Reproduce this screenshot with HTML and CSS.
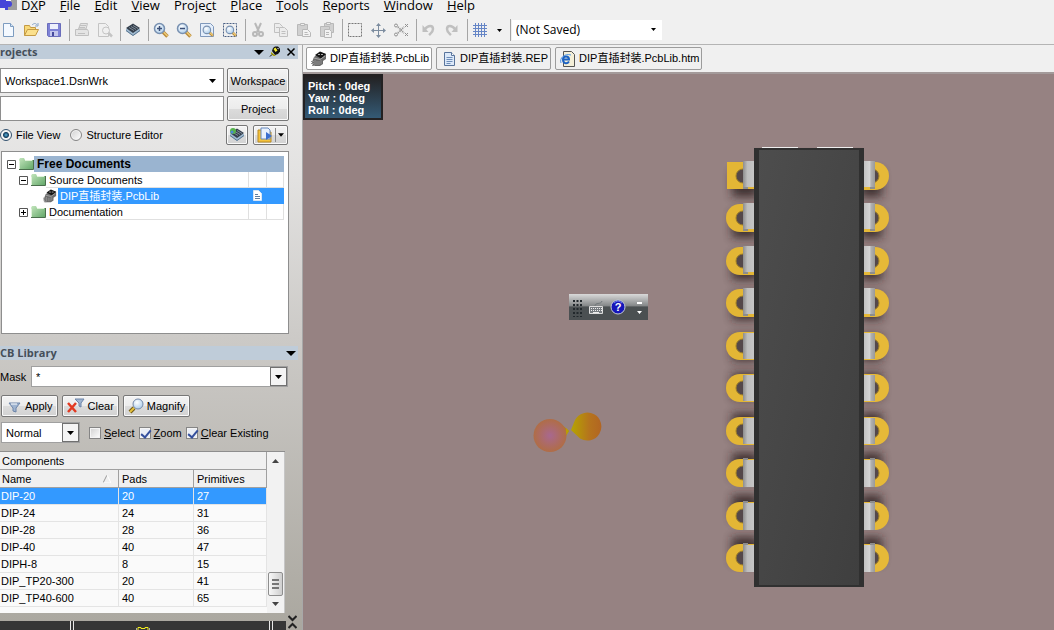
FILE: index.html
```html
<!DOCTYPE html>
<html lang="en">
<head>
<meta charset="utf-8">
<title>DXP - PCB Library</title>
<link rel="stylesheet" href="styles.css">
</head>
<body>
<svg class="defs" aria-hidden="true">
  <defs>
    <linearGradient id="folderGreen" x1="0" y1="0" x2="1" y2="1"><stop offset="0" stop-color="#c4e6bd"/><stop offset="1" stop-color="#5fa566"/></linearGradient>
    <radialGradient id="gloss" cx=".4" cy=".35" r=".7"><stop offset="0" stop-color="#fff"/><stop offset="1" stop-color="#a9cbea"/></radialGradient>
    <symbol id="i-folder" viewBox="0 0 16 14"><path d="M1 13V3l1-2h4l1 2h8v10z" fill="url(#folderGreen)"/><path d="M1.500 3.500V12M7 3.500h7" stroke="#dff3da" fill="none"/><path d="M1 12.500h14.500V3" stroke="#4a6e4c" fill="none"/></symbol>
    <symbol id="i-chip" viewBox="0 0 16 16"><path d="M3 6l6-5 6 2v5l-3 2v3l-3 2H2l-1-4z" fill="#6a6a6a"/><path d="M4 4l5-3.500 6 2.500-5 4.500z" fill="#161616"/><path d="M0 10.500h3M0 12.500h3M1 14.500h3M4 9v5M6 10v4M8 10v4M10 9v4" stroke="#909090"/><path d="M3 7l6 1.500 5-3.500" stroke="#a8a8a8" fill="none"/><path d="M7 3.500h2M10 3.500h2" stroke="#aaa"/></symbol>
    <symbol id="i-doc" viewBox="0 0 16 16"><path d="M3.500 1.500h7l3 3v10h-10z" fill="#dce9f9" stroke="#58749c"/><path d="M10.500 1.500v3h3" fill="#fff" stroke="#58749c"/><path d="M5.500 6.500h6M5.500 8.500h6M5.500 10.500h6M5.500 12.500h4" stroke="#6e8db8"/></symbol>
    <symbol id="i-stack" viewBox="0 0 16 16"><path d="M1 9l7 5 7-5v-2H1z" fill="#9fb9cf"/><path d="M1 8.500l7 5 7-5" stroke="#5a7690" fill="none"/><path d="M1 6l7-4.500L15 6l-7 5z" fill="#333e4b"/><path d="M4 5.500l5 3M6 4.500l5 3M8 3.500l5 3" stroke="#7f8b98"/></symbol>
    <symbol id="i-lens" viewBox="0 0 16 16"><path d="M10 10l4.500 4.500" stroke="#b98a3a" stroke-width="3.500"/><path d="M10.500 10l4 4" stroke="#f0cd78" stroke-width="1.500"/><circle cx="6.500" cy="6.500" r="5" fill="url(#gloss)" stroke="#7890b0" stroke-width="1.500"/></symbol>
    <symbol id="i-down" viewBox="0 0 7 4"><path d="M0 0h7L3.500 4z"/></symbol>
  </defs>
</svg>

<nav class="menubar">
  <svg class="logo" viewBox="0 0 17 10"><path d="M0 0h8v10H0z" fill="#4646d8"/><path d="M8 0h9v10H8z" fill="#9d9d9d"/><path d="M0 8h5v2H0z" fill="#eee"/><circle cx="9" cy="4" r="3" fill="#4646d8"/><path d="M6 0h5v1H6z" fill="#f4f4f4"/></svg>
  <button>D<u>X</u>P</button><button><u>F</u>ile</button><button><u>E</u>dit</button><button><u>V</u>iew</button><button>Proje<u>c</u>t</button><button><u>P</u>lace</button><button><u>T</u>ools</button><button><u>R</u>eports</button><button><u>W</u>indow</button><button><u>H</u>elp</button>
</nav>

<div class="toolbar">
  <button aria-label="New"><svg viewBox="0 0 16 16"><path d="M3.500 1.500h7l3 3v10h-10z" fill="#f4f9ff" stroke="#7d9cc0"/><path d="M10.500 1.500v3h3" fill="#d6e5f6" stroke="#7d9cc0"/></svg></button>
  <button aria-label="Open"><svg viewBox="0 0 16 16"><path d="M1.500 13.500v-10h5l1 2h5v3" fill="#f8d978" stroke="#c49a45"/><path d="M1.500 13.500l3-6h11l-3 6z" fill="#fbe08c" stroke="#c49a45"/><path d="M9 3c2-2 4-2 5 0m1-2v3h-3" fill="none" stroke="#88a5c8"/></svg></button>
  <button aria-label="Save"><svg viewBox="0 0 16 16"><path d="M1.500 1.500h13v13h-12l-1-1z" fill="#7e82d6" stroke="#6a6dbb"/><path d="M4 2h8v5H4z" fill="#edf0fc"/><path d="M4 9h8v5H4z" fill="#c3c6ec"/><path d="M6 10h2v4H6z" fill="#45499d"/></svg></button>
  <i class="sep"></i>
  <button aria-label="Print" disabled><svg viewBox="0 0 16 16" fill="#e4e4e4" stroke="#c0c0c0"><path d="M4.500 7l2-5.500h7L12 7z"/><path d="M1.500 7.500h12l1 2v4h-13z"/><path d="M4 11.500h7M6 3.500h6M5 5.500h6"/></svg></button>
  <button aria-label="Preview" disabled><svg viewBox="0 0 16 16" fill="#f0f0f0" stroke="#c4c4c4"><path d="M1.500 1.500h7l3 3v10h-10z"/><circle cx="9" cy="8.500" r="3.500"/><path d="M11.500 11l3.500 3.500" stroke-width="2.500"/></svg></button>
  <i class="sep"></i>
  <button aria-label="Layers"><svg><use href="#i-stack"/></svg></button>
  <i class="sep"></i>
  <button aria-label="Zoom in"><svg viewBox="0 0 16 16"><use href="#i-lens"/><path d="M4 6.500h5M6.500 4v5" stroke="#3a4f78" stroke-width="1.500"/></svg></button>
  <button aria-label="Zoom out"><svg viewBox="0 0 16 16"><use href="#i-lens"/><path d="M4 6.500h5" stroke="#3a4f78" stroke-width="1.500"/></svg></button>
  <button aria-label="Zoom to page"><svg viewBox="0 0 16 16"><path d="M1.500 1.500h10l3 3v10h-13z" fill="#e4eefb" stroke="#7f98bb"/><use href="#i-lens" x="3" y="3" width="12" height="12"/></svg></button>
  <button aria-label="Zoom to selection"><svg viewBox="0 0 16 16"><path d="M1.500 1.500h13v13h-13z" fill="none" stroke="#4b6084" stroke-dasharray="2 1"/><use href="#i-lens" x="3" y="3" width="12" height="12"/></svg></button>
  <i class="sep"></i>
  <button aria-label="Cut" disabled><svg viewBox="0 0 16 16" fill="none" stroke="#b8b8b8" stroke-width="2"><path d="M5 1l4 9M11 1L7 10"/><circle cx="5" cy="12" r="2"/><circle cx="11" cy="12" r="2"/></svg></button>
  <button aria-label="Copy" disabled><svg viewBox="0 0 16 16" fill="#ececec" stroke="#c0c0c0"><path d="M1.500 1.500h5l3 3v6h-8z"/><path d="M6.500 5.500h5l3 3v6h-8z"/><path d="M3 5.500h3M8.500 9.500h4M8.500 11.500h4"/></svg></button>
  <button aria-label="Paste" disabled><svg viewBox="0 0 16 16" fill="#d0d0d0" stroke="#b8b8b8"><path d="M1.500 2.500h10v11h-10z"/><path d="M4.500 1.500h4v2h-4z" fill="#eee"/><path d="M6.500 7.500h5l3 3v4h-8z" fill="#f2f2f2"/><path d="M8.500 10.500h3M8.500 12.500h4"/></svg></button>
  <button aria-label="Rubber stamp" disabled><svg viewBox="0 0 16 16" fill="#d0d0d0" stroke="#b8b8b8"><path d="M5.500 1.500h9v9h-9z"/><path d="M1.500 4.500h9v10h-9z"/><path d="M7.500.500h4v2h-4z" fill="#eee"/><path d="M5.500 7.500h5l2 2v6h-7z" fill="#f2f2f2"/><path d="M7 10.500h3M7 12.500h3"/></svg></button>
  <i class="sep"></i>
  <button aria-label="Select area"><svg viewBox="0 0 16 16"><path d="M1.500 1.500h13v13h-13z" fill="none" stroke="#777" stroke-dasharray="2 1"/></svg></button>
  <button aria-label="Move"><svg viewBox="0 0 16 16"><path d="M8.500 3v11M3 8.500h11" stroke="#7c8c9f"/><path d="M8.500 1l2.500 3h-5zM8.500 16l2.500-3h-5zM1 8.500l3-2.500v5zM16 8.500l-3-2.500v5z" fill="#7c8c9f"/></svg></button>
  <button aria-label="Deselect"><svg viewBox="0 0 16 16" fill="none" stroke="#909090"><path d="M5 5l6 6M5 11l6-6" stroke-dasharray="1 1" stroke-width="2"/><circle cx="3" cy="3.500" r="1.500"/><circle cx="3" cy="12.500" r="1.500"/><path d="M12 2l3 3m0-3l-3 3M12 11l3 3m0-3l-3 3"/></svg></button>
  <i class="sep"></i>
  <button aria-label="Undo" disabled><svg viewBox="0 0 16 16"><path d="M4 7c3-4 8-4 8 0 0 3-2 4-4 6" fill="none" stroke="#c0c0c0" stroke-width="2.500"/><path d="M1.500 3v7h6z" fill="#c0c0c0"/></svg></button>
  <button aria-label="Redo" disabled><svg viewBox="0 0 16 16"><path d="M11 7C8 3 3 3 3 7c0 3 2 4 4 6" fill="none" stroke="#c0c0c0" stroke-width="2.500"/><path d="M13.500 3v7h-6z" fill="#c0c0c0"/></svg></button>
  <i class="sep"></i>
  <button aria-label="Grid"><svg viewBox="0 0 16 16"><path d="M3.500 1v14M6.500 1v14M9.500 1v14M12.500 1v14M1 3.500h14M1 6.500h14M1 9.500h14M1 12.500h14" stroke="#6585c6"/></svg></button>
  <button class="drop" aria-label="Grid options"><svg class="arrow"><use href="#i-down"/></svg></button>
  <i class="sep"></i>
  <div class="combo saved"><select aria-label="View configuration"><option>(Not Saved)</option></select><svg class="arrow"><use href="#i-down"/></svg></div>
</div>

<div class="work">
  <aside class="side">
    <div class="title projects"><h2>rojects</h2>
      <button aria-label="Panel menu"><svg viewBox="0 0 12 12"><path d="M1 4h10L6 9z"/></svg></button>
      <button aria-label="Pin"><svg viewBox="0 0 12 12"><path d="M3 5l1-3 2-1.500h3l2 2v3L9 8 6 9z" fill="#111"/><path d="M4.500 3l2-1.500 2 3L6.500 6z" fill="#f6ee30"/><path d="M8 2h1.500v1.500z" fill="#fff"/><path d="M2 6l5 4H4.500L2 8z" fill="#a8a000"/><path d="M3 8.500l-2 2" stroke="#000"/></svg></button>
      <button aria-label="Close"><svg viewBox="0 0 12 12"><path d="M2.500 2.500l7 7M9.500 2.500l-7 7" stroke="#000" stroke-width="1.500"/></svg></button>
    </div>
    <div class="files">
      <div class="combo workspace"><select aria-label="Workspace file"><option>Workspace1.DsnWrk</option></select><svg class="arrow"><use href="#i-down"/></svg></div>
      <button class="btn">Workspace</button>
      <input class="field" type="text" aria-label="Project file">
      <button class="btn">Project</button>
    </div>
    <div class="views">
      <label><input type="radio" name="view" checked>File View</label>
      <label><input type="radio" name="view">Structure Editor</label>
      <button class="btn first" aria-label="Refresh"><svg viewBox="0 0 16 16"><use href="#i-stack"/><circle cx="4" cy="4" r="3" fill="#54b34a"/><circle cx="3" cy="5" r="1.500" fill="#4c86d8"/></svg></button>
      <button class="btn open" aria-label="Open options"><svg viewBox="0 0 16 16"><path d="M1 3h5l1 2h7v10H1z" fill="#f5c33c" stroke="#b88a24"/><path d="M4 1h7l2 2v9H4z" fill="#e8f1fd" stroke="#6789bd"/><path d="M9 5l6 4-6 4z" fill="#3a6fd0"/></svg><i></i><svg class="arrow"><use href="#i-down"/></svg></button>
    </div>
    <div class="tree" role="tree">
      <div class="node root" role="treeitem"><svg class="toggle" viewBox="0 0 9 9"><path d="M.500.500h8v8h-8z" fill="#fff" stroke="#555"/><path d="M2 4.500h5" stroke="#000"/></svg><svg class="ico"><use href="#i-folder"/></svg><div class="cell"><b>Free Documents</b></div></div>
      <div class="node sub" role="treeitem"><svg class="toggle" viewBox="0 0 9 9"><path d="M.500.500h8v8h-8z" fill="#fff" stroke="#555"/><path d="M2 4.500h5" stroke="#000"/></svg><svg class="ico"><use href="#i-folder"/></svg><div class="cell"><span>Source Documents</span><i></i><i></i></div></div>
      <div class="node leaf" role="treeitem" aria-selected="true"><svg class="ico"><use href="#i-chip"/></svg><div class="cell"><span>DIP直插封装.PcbLib</span><i><svg viewBox="0 0 9 11"><path d="M.500.500h5l3 3v7h-8z" fill="#fff" stroke="#d8e6f5"/><path d="M2 4.500h3M2 6.500h5M2 8.500h5" stroke="#5f7da0"/></svg></i><i></i></div></div>
      <div class="node sub" role="treeitem"><svg class="toggle" viewBox="0 0 9 9"><path d="M.500.500h8v8h-8z" fill="#fff" stroke="#555"/><path d="M2 4.500h5M4.500 2v5" stroke="#000"/></svg><svg class="ico"><use href="#i-folder"/></svg><div class="cell"><span>Documentation</span><i></i><i></i></div></div>
    </div>

    <div class="title library"><h2>CB Library</h2><button aria-label="Panel menu"><svg viewBox="0 0 12 12"><path d="M1 4h10L6 9z"/></svg></button></div>
    <div class="mask"><label for="mask">Mask</label><div class="combo boxed"><select id="mask"><option>*</option></select><svg class="arrow"><use href="#i-down"/></svg></div></div>
    <div class="actions">
      <button class="btn"><svg viewBox="0 0 16 16"><path d="M3 5h11l-4 5v4l-3-1v-3z" fill="#9fb4d0" stroke="#6c84a8"/><path d="M5 6h6" stroke="#fff"/></svg>Apply</button>
      <button class="btn"><svg class="wide" viewBox="0 0 18 16"><path d="M8 1h9l-3 4v4l-2-1V5z" fill="#9fb4d0" stroke="#6c84a8"/><path d="M1 5l8 9M9 5l-8 9" stroke="#e23a22" stroke-width="2.500"/></svg>Clear</button>
      <button class="btn"><svg viewBox="0 0 16 16"><path d="M6 10l-4 4" stroke="#715b18" stroke-width="4"/><path d="M6 10l-4 4" stroke="#e6c23d" stroke-width="2"/><circle cx="10" cy="6" r="5" fill="url(#gloss)" stroke="#7488a8"/></svg>Magnify</button>
    </div>
    <div class="options">
      <div class="combo boxed mode"><select aria-label="Highlight mode"><option>Normal</option></select><svg class="arrow"><use href="#i-down"/></svg></div>
      <label><input type="checkbox"><span><u>S</u>elect</span></label>
      <label><input type="checkbox" checked><span><u>Z</u>oom</span></label>
      <label><input type="checkbox" checked><span><u>C</u>lear Existing</span></label>
    </div>
    <div class="list">
      <table>
        <colgroup><col class="c1"><col class="c2"><col></colgroup>
        <thead>
          <tr><th colspan="3">Components</th></tr>
          <tr><th><div class="sort">Name<svg viewBox="0 0 8 8"><path d="M0 8l4-8" stroke="#999" fill="none"/><path d="M4 0l4 8H0" stroke="#fff" fill="none"/></svg></div></th><th>Pads</th><th>Primitives</th></tr>
        </thead>
        <tbody>
          <tr class="on"><td>DIP-20</td><td>20</td><td>27</td></tr>
          <tr><td>DIP-24</td><td>24</td><td>31</td></tr>
          <tr><td>DIP-28</td><td>28</td><td>36</td></tr>
          <tr><td>DIP-40</td><td>40</td><td>47</td></tr>
          <tr><td>DIPH-8</td><td>8</td><td>15</td></tr>
          <tr><td>DIP_TP20-300</td><td>20</td><td>41</td></tr>
          <tr><td>DIP_TP40-600</td><td>40</td><td>65</td></tr>
        </tbody>
      </table>
      <div class="scroll"><svg viewBox="0 0 7 4"><path d="M0 4h7L3.500 0z" fill="#444"/></svg><div class="thumb"><i></i><i></i><i></i></div><svg viewBox="0 0 7 4"><path d="M0 0h7L3.500 4z" fill="#444"/></svg></div>
    </div>
    <div class="foot">
      <div class="strip"><i></i><svg viewBox="0 0 14 4"><path d="M2 4V1.500h3v1h4v-1h3V4" fill="none" stroke="#f2ee1c"/><path d="M0 2h1v2H0zM13 2h1v2h-1z" fill="#aaa"/></svg><i></i></div>
      <svg class="chev" viewBox="0 0 9 14"><path d="M.500 1l4 4 4-4M.500 13l4-4 4 4" fill="none" stroke="#222" stroke-width="2"/></svg>
    </div>
  </aside>

  <main class="main">
    <div class="tabs">
      <button class="tab on"><svg><use href="#i-chip"/></svg>DIP直插封装.PcbLib</button>
      <button class="tab"><svg><use href="#i-doc"/></svg>DIP直插封装.REP</button>
      <button class="tab"><svg viewBox="0 0 16 16"><path d="M3.500.500h8l3 3v12h-11z" fill="#f4efd8" stroke="#555"/><path d="M3 8.500h6c0-4-6-4-6 0s4 5 6 2" fill="none" stroke="#1b62c4" stroke-width="2"/><path d="M1 12C-1 7 5 2 11 4" fill="none" stroke="#4f94e6"/></svg>DIP直插封装.PcbLib.htm</button>
    </div>
    <div class="canvas">
      <div class="hud"><div>Pitch : 0deg</div><div>Yaw : 0deg</div><div>Roll : 0deg</div></div>
      <div class="float">
        <svg viewBox="0 0 79 26">
          <path d="M5 6v17M8.500 6v17M12 6v17" stroke="#22282c" stroke-width="2" stroke-dasharray="2 2"/>
          <path d="M20.500 12.500h13v7h-13z" fill="#777c80" stroke="#ddd"/><path d="M22 14.500h11M22 16.500h11" stroke="#eee" stroke-dasharray="1 1"/><path d="M24 18.500h6" stroke="#eee"/><path d="M26 12c0-4 6-1 7-5" fill="none" stroke="#70777a"/>
          <circle cx="49" cy="13" r="7" fill="#1616b8" stroke="#c4cbd4"/><path d="M45 9q4-4 8 0" stroke="#6c7cf0" fill="none"/>
          <path d="M68 8h5v2h-5zM68 17h5l-2.500 3z" fill="#fff"/>
        </svg><span>?</span>
      </div>
      <svg class="cones" viewBox="0 0 72 44">
        <defs><radialGradient id="c1"><stop offset="0" stop-color="#a8688f"/><stop offset="1" stop-color="#b06d46"/></radialGradient><linearGradient id="c2"><stop offset="0" stop-color="#b5a400"/><stop offset=".6" stop-color="#b5741d"/><stop offset="1" stop-color="#b26522"/></linearGradient></defs>
        <path d="M28 13l9 8-7 9z" fill="#b58018"/><path d="M34 18l3 3-3 5z" fill="#b9a000"/><circle cx="18" cy="25.500" r="16.500" fill="url(#c1)"/>
        <path d="M39 20l4-10A14 14 0 1 1 48 28.500z" fill="url(#c2)"/>
      </svg>
      <svg class="package" viewBox="0 0 190 460">
        <defs>
          <linearGradient id="body" x1="0" y1="0" x2="1" y2="1"><stop offset="0" stop-color="#4d4d4d"/><stop offset="1" stop-color="#3f3f3f"/></linearGradient>
          <linearGradient id="leadL"><stop offset="0" stop-color="#8d8d8d"/><stop offset=".4" stop-color="#bdbdbd"/><stop offset="1" stop-color="#c6c6c6"/></linearGradient>
          <linearGradient id="leadR"><stop offset="0" stop-color="#c2c2c2"/><stop offset=".5" stop-color="#d4d4d4"/><stop offset=".65" stop-color="#b0b0b0"/><stop offset="1" stop-color="#999"/></linearGradient>
          <filter id="soft" x="-50%" y="-50%" width="200%" height="200%"><feGaussianBlur stdDeviation="5"/></filter>
          <g id="shade"><path d="M18 -13h26v26h-26zM146 -13h22v26h-22z" fill="#2a1a1a" opacity=".8" filter="url(#soft)"/></g>
          <g id="round"><path d="M40-14H26a14 14 0 0 0 0 28h14z"/></g>
          <g id="square"><path d="M13-14h27v27H13z"/></g>
          <g id="right"><path d="M150-14h11a14 14 0 0 1 0 28h-11z" fill="#e6b938"/><circle cx="158" cy="0" r="7" fill="#54484a" stroke="#9c7d28"/></g>
          <g id="hole"><circle cx="29" cy="0" r="7" fill="#54484a" stroke="#9c7d28"/></g>
          <g id="down"><use href="#hole"/><use href="#right"/><path d="M29 9h5v4h-5zM156 9h5v4h-5z" fill="#8d8d8d"/><path d="M29-15h11v26H29z" fill="url(#leadL)"/><path d="M150-15h11v26h-11z" fill="url(#leadR)"/></g>
          <g id="mid"><use href="#hole"/><use href="#right"/><path d="M29-13h11v26H29z" fill="url(#leadL)"/><path d="M150-13h11v26h-11z" fill="url(#leadR)"/></g>
          <g id="up"><use href="#hole"/><use href="#right"/><path d="M29-15h5v4h-5zM156-15h5v4h-5z" fill="#8d8d8d"/><path d="M29-13h11v27H29z" fill="url(#leadL)"/><path d="M150-13h11v27h-11z" fill="url(#leadR)"/></g>
        </defs>
        <use href="#shade" y="44"/><use href="#shade" y="85"/><use href="#shade" y="127"/><use href="#shade" y="167"/><use href="#shade" y="208"/><use href="#shade" y="246"/><use href="#shade" y="286"/><use href="#shade" y="326"/><use href="#shade" y="368"/><use href="#shade" y="410"/>
        <g fill="#e3b635"><use href="#square" y="36"/><use href="#round" y="78"/><use href="#round" y="121"/><use href="#round" y="163"/><use href="#round" y="206"/><use href="#round" y="248"/><use href="#round" y="291"/><use href="#round" y="333"/><use href="#round" y="376"/><use href="#round" y="418"/></g>
        <use href="#down" y="36"/><use href="#down" y="78"/><use href="#down" y="121"/><use href="#down" y="163"/><use href="#mid" y="206"/>
        <use href="#mid" y="248"/><use href="#mid" y="291"/><use href="#up" y="333"/><use href="#up" y="376"/><use href="#up" y="418"/>
        <path d="M48 7h36v1H48zM103 7h36v1h-36z" fill="#eee"/>
        <path d="M40 8h110v439H40z" fill="#303030"/><path d="M45 10h100v435H45z" fill="url(#body)"/>
      </svg>
    </div>
  </main>
</div>
</body>
</html>
```
FILE: styles.css
```css
* { box-sizing: border-box; }
body {
  margin: 0;
  height: 100vh;
  display: flex;
  flex-direction: column;
  overflow: hidden;
  background: #f0f0f0;
  color: #000;
  font: 11px/16px "Liberation Sans", "Noto Sans CJK SC", sans-serif;
}
button, select, input { font: inherit; color: inherit; margin: 0; }
button { padding: 0; border: 0; background: none; white-space: nowrap; }
svg { display: block; flex: none; }
.defs { position: absolute; width: 0; height: 0; }

.menubar { display: flex; gap: 14px; height: 18px; font: 13px/10px "Open Sans", "Noto Sans", sans-serif; align-items: flex-start; }
.menubar .logo { width: 17px; height: 10px; margin-right: -10px; }

.toolbar { display: flex; align-items: center; height: 27px; padding-bottom: 2px; border-bottom: 1px solid #b4b4b4; }
.toolbar button { width: 23px; height: 16px; }
.toolbar button svg { width: 16px; height: 16px; }
.toolbar .drop { width: 15px; }
.sep { width: 1px; height: 22px; margin-right: 4px; background: #a5a5a5; }
.toolbar .sep:last-of-type { margin-right: 1px; }

.combo { position: relative; background: #fff; display: flex; }
.combo select { appearance: none; border: 0; background: none; width: 100%; padding: 0 4px; outline: 0; border-radius: 0; }
.combo .arrow { position: absolute; right: 6px; top: 50%; margin-top: -2px; width: 7px; height: 4px; pointer-events: none; }
.saved { width: 150px; height: 20px; font: 12px/20px "Open Sans", "Noto Sans", sans-serif; }
.toolbar .saved .arrow, .toolbar button .arrow { width: 5px; height: 3px; }
.toolbar .drop .arrow { margin-left: 2px; }

.work { flex: 1; display: flex; min-height: 0; }
.side { width: 303px; flex: none; display: flex; flex-direction: column; border-right: 1px solid #a8a8a8; background: linear-gradient(#efefef, #e3e2e1 22%, #cccac7 50%, #aaa79f); }
.title { display: flex; align-items: center; gap: 4px; height: 14px; margin-right: 4px; padding-right: 1px; background: #bfccd9; }
.title h2 { flex: 1; margin: 0; font: bold 11px/14px "Open Sans", "Noto Sans", sans-serif; color: #454f5a; }
.title svg { width: 12px; height: 12px; }

.files { display: grid; grid-template-columns: 1fr 62px; gap: 3px; margin: 9px 13px 0 0; }
.workspace, .field { height: 25px; border: 1px solid #8e8e8e; background: #fff; }
.field { width: 100%; padding: 0 4px; }
.workspace .arrow { right: 7px; }
.btn { display: flex; align-items: center; justify-content: center; gap: 3px; border: 1px solid #777; border-radius: 2px; background: linear-gradient(#f3f3f3, #ececec 50%, #dcdcdc 50%, #d2d2d2); box-shadow: inset 0 0 0 1px #fafafa; }
.btn svg { width: 16px; height: 16px; }
.btn .arrow { width: 6px; height: 4px; }

.views { display: flex; align-items: center; height: 20px; margin: 4px 14px 0 0; }
.views label { display: flex; align-items: center; gap: 4px; margin-right: 10px; white-space: nowrap; }
.views .btn { width: 22px; height: 20px; }
.views .first { margin-left: auto; margin-right: 5px; }
.views .open { width: 35px; gap: 2px; }
.open i { width: 1px; height: 14px; background: #888; }
input[type="radio"], input[type="checkbox"] { appearance: none; width: 12px; height: 12px; border: 1px solid #858585; background: linear-gradient(135deg, #d0d0d0, #fff); box-shadow: inset 0 0 0 1px #f4f4f4; }
input[type="radio"] { border-radius: 50%; }
input[type="radio"]:checked { border-color: #33526f; background: radial-gradient(#5bb6e0, #123a5c 35%, #f2f2f2 50%); }
input[type="checkbox"]:checked { background: #e9edf5; position: relative; }
input[type="checkbox"]:checked::after { content: ""; position: absolute; left: 3px; top: 0; width: 4px; height: 8px; border: solid #344f9c; border-width: 0 2px 2px 0; transform: rotate(40deg); }

.tree { height: 183px; margin: 6px 13px 0 1px; padding: 4px 4px 0 5px; border: 1px solid #8e8e8e; background: #fff; }
.node { display: flex; align-items: center; height: 16px; }
.node .toggle { width: 9px; height: 9px; margin-right: 2px; }
.node .ico { width: 16px; height: 14px; }
.cell { flex: 1; display: flex; height: 16px; padding-left: 2px; line-height: 16px; white-space: nowrap; border-bottom: 1px solid #e0e0e0; }
.cell span { flex: 1; }
.cell i { width: 18px; border-left: 1px solid #e0e0e0; }
.cell i:last-child { border-right: 1px solid #e0e0e0; }
.cell svg { width: 9px; height: 11px; margin: 2px 4px; }
.root .cell { background: #9ab4d0; border: 0; padding-left: 3px; font-size: 12px; }
.sub { padding-left: 12px; }
.sub .cell { padding-left: 3px; }
.leaf { padding-left: 35px; }
.leaf .cell { background: #3399ff; color: #fff; border: 0; }
.leaf .cell i { border-color: #3399ff; }

.library { margin-top: 12px; }
.mask { display: flex; align-items: center; justify-content: space-between; height: 21px; margin: 6px 14px 0 0; }
.boxed { flex: none; height: 21px; border: 1px solid #a0a0a0; }
.mask .boxed { width: 257px; }
.boxed .arrow { right: 0; top: 0; margin: 0; width: 17px; height: 19px; padding: 7px 4px 6px; border: 1px solid #707070; background: #f4f4f4; }
.actions { display: flex; gap: 4px; margin: 8px 0 0 1px; }
.actions .btn { height: 22px; padding: 0 4px; }
.actions .wide { width: 18px; }
.options { display: flex; align-items: center; height: 21px; gap: 4px; margin: 5px 0 0 1px; }
.mode { width: 79px; margin-right: 5px; }
.options label { display: flex; align-items: center; gap: 3px; white-space: nowrap; }

.list { display: flex; flex: none; height: 162px; margin: 8px 17px 0 0; background: #fafafa; border-top: 1px solid #8e8e8e; }
table { flex: 1; align-self: flex-start; table-layout: fixed; border-collapse: separate; border-spacing: 0; }
.c1 { width: 119px; }
.c2 { width: 75px; }
th, td { height: 17px; padding: 0 2px; font-weight: normal; text-align: left; line-height: 16px; border-right: 1px solid #e4e4e4; border-bottom: 1px solid #e4e4e4; }
td { padding-left: 1px; }
td + td { padding-left: 3px; }
th { height: 18px; background: #f0f0f0; border-color: #a0a0a0; }
th + th { padding-left: 3px; }
.sort { display: flex; align-items: center; justify-content: space-between; padding-right: 5px; }
.sort svg { width: 8px; height: 8px; }
.on td { background: #3399ff; color: #fff; }
.scroll { width: 18px; display: flex; flex-direction: column; align-items: center; padding: 7px 0; background: #f2f2f2; border-right: 1px solid #c6c6c6; }
.scroll svg { width: 7px; height: 4px; }
.thumb { display: flex; flex-direction: column; justify-content: center; align-items: center; gap: 2px; width: 15px; height: 24px; margin: auto 0 6px; border: 1px solid #8e8e8e; border-radius: 2px; background: linear-gradient(90deg, #f8f8f8, #cfcfcf); }
.thumb i { width: 7px; height: 2px; background: #777; }

.foot { flex: 1; display: flex; align-items: flex-end; gap: 2px; padding-bottom: 1px; min-height: 0; }
.strip { width: 286px; height: 9px; margin-bottom: -1px; display: flex; justify-content: space-between; align-items: flex-end; padding: 0 13px 0 70px; background: #363636; }
.strip i { width: 4px; height: 9px; border: solid #e8e8e8; border-width: 0 1px; }
.strip svg { width: 14px; height: 4px; margin-right: 58px; }
.chev { width: 9px; height: 14px; }

.main { flex: 1; min-width: 0; display: flex; flex-direction: column; }
.tabs { display: flex; flex: none; gap: 4px; height: 29px; padding: 2px 3px 0; border-bottom: 2px solid #a39a9a; }
.tab { display: flex; align-items: center; gap: 3px; height: 23px; padding: 0 2px 0 4px; border: 1px solid #9c9c9c; border-radius: 2px; line-height: 21px; }
.tab svg { width: 16px; height: 16px; }
.tab.on { background: #fff; }
.canvas { position: relative; flex: 1; overflow: hidden; background: #968282; }
.hud { width: 80px; height: 46px; padding: 4px 3px; border: 2px solid #232122; background: linear-gradient(#232122, #345a75); color: #fff; font-weight: bold; line-height: 12px; white-space: nowrap; }
.float { position: absolute; left: 266px; top: 220px; width: 79px; height: 26px; background: linear-gradient(#d9d9d9, #858889 45%, #4b5052 50%, #4b5052); }
.float svg { width: 79px; height: 26px; }
.float span { position: absolute; left: 45px; top: 5px; color: #fff; font-weight: bold; line-height: 16px; width: 8px; text-align: center; }
.cones { position: absolute; left: 229px; top: 336px; width: 72px; height: 44px; }
.package { position: absolute; left: 411px; top: 66px; width: 190px; height: 460px; }
```
